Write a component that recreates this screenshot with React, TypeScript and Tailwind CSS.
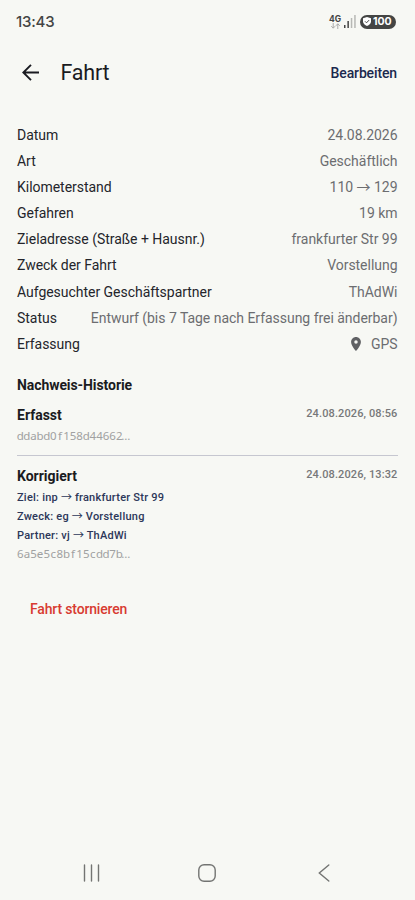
import type { ReactNode } from "react";

const details: [string, ReactNode][] = [
  ["Datum", "24.08.2026"],
  ["Art", "Geschäftlich"],
  ["Kilometerstand", <>110 <Arrow /> 129</>],
  ["Gefahren", "19 km"],
  ["Zieladresse (Straße + Hausnr.)", "frankfurter Str 99"],
  ["Zweck der Fahrt", "Vorstellung"],
  ["Aufgesuchter Geschäftspartner", "ThAdWi"],
  ["Status", "Entwurf (bis 7 Tage nach Erfassung frei änderbar)"],
];

function Arrow() {
  return <span className="font-['Noto_Sans_CJK_JP',sans-serif] font-normal leading-none tracking-normal">→</span>;
}

function Hash({ value }: { value: string }) {
  return (
    <div className="flex h-[19px] items-center font-['Noto_Sans',sans-serif] text-[11.500px] leading-none text-[#a0a1a1]">
      {value.split("").map((c, i) => (
        <span key={i} className="flex w-[6.6px] justify-center">{c}</span>
      ))}
    </div>
  );
}

function Entry({ title, time }: { title: string; time: string }) {
  return (
    <div className="flex h-[22px] justify-between">
      <span className="text-[14px] font-bold leading-[22px] text-[#1a1b21]">{title}</span>
      <span className="text-[11px] font-medium leading-[20px] tracking-[0.12px] text-[#77787a]">{time}</span>
    </div>
  );
}

export default function App() {
  return (
    <main className="flex h-[900px] w-[415px] flex-col overflow-hidden bg-[#f7f8f4] font-['Roboto',sans-serif] text-[#24252b]">
      <header className="flex h-[43px] items-center justify-between pl-4 pr-[19px]">
        <span className="pt-px font-['Inter',sans-serif] text-[15px] font-medium tracking-[-0.2px] text-[#444544]">13:43</span>
        <div className="flex items-center">
          <div className="flex w-3 flex-col items-center">
            <span className="font-['Inter',sans-serif] text-[8.5px] font-bold leading-[8px] text-[#444544]">4G</span>
            <svg className="h-[6px] w-[9px]" viewBox="0 0 9 6" fill="none" stroke="#aaa" strokeWidth="1">
              <path d="M2.2 0v5M.3 3.2l1.9 2 1.9-2M6.8 6V.8M4.9 2.8l1.9-2 1.9 2" />
            </svg>
          </div>
          <svg className="ml-[3px] h-[13px] w-3" viewBox="0 0 12 13">
            <path fill="#444544" d="M0 10h1.5v3H0zM3.4 6h1.5v7H3.4z" />
            <path fill="#b7b8b5" d="M6.8 3h1.5v10H6.8zM10.2 0h1.5v13h-1.5z" />
          </svg>
          <div className="ml-1 flex h-[14px] w-9 items-center rounded-full bg-[#444544] pl-[3px] text-white">
            <svg className="h-[9px] w-2" viewBox="0 0 8 9">
              <path fill="#fff" d="M4 0 8 1.3v3.3C8 6.8 6 8.3 4 9 2 8.3 0 6.8 0 4.600V1.300z" />
              <path fill="none" stroke="#444544" d="m2 4.300 1.500 1.500 2.600-2.700" />
            </svg>
            <span className="ml-[2px] pt-px font-['Inter',sans-serif] text-[10.5px] font-bold leading-[12px]">100</span>
          </div>
        </div>
      </header>

      <nav className="flex h-[60px] items-center pl-[22px] pr-[18px]">
        <svg className="mb-px h-[17px] w-[17px]" viewBox="0 0 17 17" fill="none" stroke="#1a1b21" strokeWidth="1.900">
          <path d="M17 8.500H1.500M9 .8 1.300 8.500 9 16.200" />
        </svg>
        <h1 className="ml-[21.500px] text-[21.500px] font-normal tracking-[-0.200px] text-[#1a1b21]">Fahrt</h1>
        <button className="ml-auto text-[14px] font-medium tracking-[-0.130px] text-[#1b294e]">Bearbeiten</button>
      </nav>

      <section className="pl-[17px] pr-[17.500px] pt-[19.200px] text-[14px] tracking-[-0.030px]">
        {details.map(([label, value]) => (
          <div key={label} className="flex h-[26.150px] items-center justify-between whitespace-nowrap">
            <span>{label}</span>
            <span className="text-[#6c6d70]">{value}</span>
          </div>
        ))}
        <div className="flex h-[26.150px] items-center justify-between">
          <span>Erfassung</span>
          <span className="flex items-center text-[#6c6d70]">
            <svg className="mr-[10px] h-[14px] w-[10px]" viewBox="5 2 14 20" fill="#606164">
              <path d="M12 2C8.130 2 5 5.130 5 9c0 5.250 7 13 7 13s7-7.750 7-13c0-3.870-3.130-7-7-7zm0 9.500a2.500 2.500 0 1 1 0-5 2.500 2.500 0 0 1 0 5z" />
            </svg>
            GPS
          </span>
        </div>
      </section>

      <section className="pl-[17px] pr-[17.500px] pt-[16.500px]">
        <h2 className="h-[22px] text-[14px] font-bold leading-[22px] tracking-[-0.080px] text-[#1a1b21]">Nachweis-Historie</h2>
        <article className="h-[60px] border-b border-[#c6c7d0] pt-2">
          <Entry title="Erfasst" time="24.08.2026, 08:56" />
          <Hash value="ddabd0f158d44662…" />
        </article>
        <article className="pt-[9px]">
          <Entry title="Korrigiert" time="24.08.2026, 13:32" />
          <div className="text-[11px] font-medium leading-[21px] tracking-[0.230px] text-[#2c3759]">
            <p className="h-[19px]">Ziel: inp <Arrow /> frankfurter Str 99</p>
            <p className="h-[19px]">Zweck: eg <Arrow /> Vorstellung</p>
            <p className="h-[19px]">Partner: vj <Arrow /> ThAdWi</p>
          </div>
          <Hash value="6a5e5c8bf15cdd7b…" />
        </article>
      </section>

      <button className="ml-[30px] mt-[36px] h-[20px] self-start text-[14px] font-medium leading-[20px] tracking-[-0.160px] text-[#d83b31]">Fahrt stornieren</button>

      <footer className="mt-auto flex h-[55px] items-center justify-between pl-[83px] pr-[85px]">
        <svg className="h-[18px] w-[17px]" viewBox="0 0 17 18" fill="none" stroke="#737472" strokeWidth="1.400" strokeLinecap="round">
          <path d="M1.500 1v16M8.500 1v16M15.500 1v16" />
        </svg>
        <svg className="mr-[4px] h-[18px] w-[18px]" viewBox="0 0 18 18" fill="none" stroke="#737472" strokeWidth="1.400">
          <rect x=".8" y=".8" width="16.400" height="16.400" rx="5.300" />
        </svg>
        <svg className="h-[18px] w-[12px]" viewBox="0 0 12 18" fill="none" stroke="#737472" strokeWidth="1.400" strokeLinecap="round">
          <path d="M10.800 1 1.300 9l9.500 8" />
        </svg>
      </footer>
    </main>
  );
}
